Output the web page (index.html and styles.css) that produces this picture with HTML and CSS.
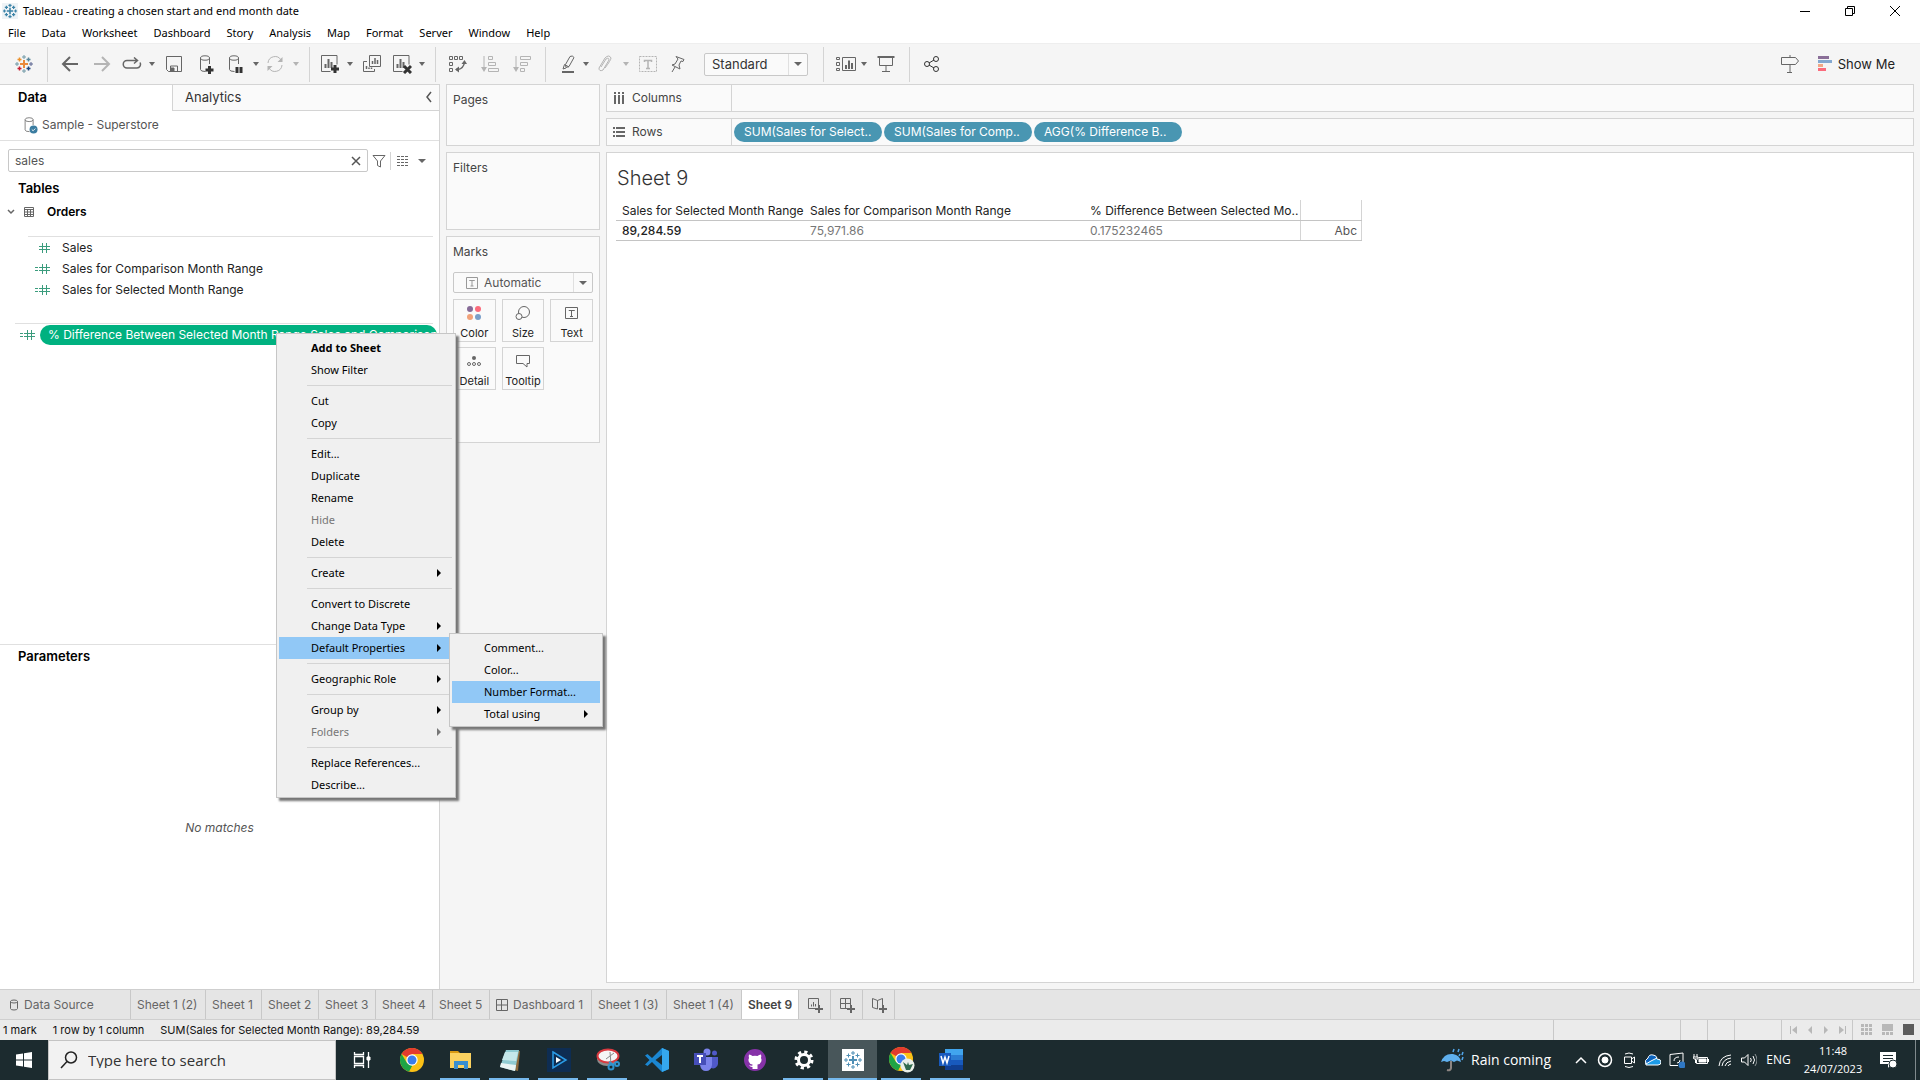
FILE: index.html
```html
<!DOCTYPE html>
<html lang="en">
<head>
<meta charset="utf-8">
<title>Tableau - creating a chosen start and end month date</title>
<link rel="stylesheet" href="styles.css">
</head>
<body>
<svg class="sprite" aria-hidden="true">
  <symbol id="mark" viewBox="0 0 18 18">
    <path d="M9 5v8M5 9h8" stroke-width="2"/>
    <path d="M9 0v4M7 2h4M9 14v4M7 16h4M2 7v4M0 9h4M16 7v4M14 9h4M4.500 2.500v4M2.500 4.500h4M13.500 2.500v4M11.500 4.500h4M4.500 11.500v4M2.500 13.500h4M13.500 11.500v4M11.500 13.500h4"/>
  </symbol>
  <symbol id="cyl" viewBox="0 0 18 20"><path d="M3.500 4v11.500q0 2 5 2M12.500 4v6M3.500 4a4.500 2.200 0 1 0 9 0a4.500 2.200 0 1 0-9 0"/></symbol>
  <symbol id="chart" viewBox="0 0 20 20"><path d="M10.500 17.500h-9v-16h15.500v9"/><path d="M5.500 14v-4M8.500 14V5M11.500 14V8" stroke-width="2"/></symbol>
  <symbol id="chrome" viewBox="0 0 24 24">
    <circle cx="12" cy="12" r="12" fill="#fbc116"/>
    <path d="M12 12L1.600 6A12 12 0 0 1 22.400 6H12z" fill="#e33b2e"/>
    <path d="M1.600 6L7 15l5 3-3.200 5.600A12 12 0 0 1 1.600 6z" fill="#1ea446"/>
    <path d="M7 15l5 2.500L9 23.500z" fill="#1ea446"/>
    <circle cx="12" cy="12" r="5.700" fill="#fff"/><circle cx="12" cy="12" r="4.500" fill="#3b7ded"/>
  </symbol>
</svg>

<header class="titlebar">
  <svg class="app-icon" width="16" height="16" viewBox="0 0 20 20"><rect width="20" height="20" fill="#eef3f6"/><g transform="translate(1 1)" stroke="#3d84a8" stroke-width="1.500" fill="none"><use href="#mark" width="18" height="18"/></g></svg>
  <h1 class="app-title">Tableau - creating a chosen start and end month date</h1>
  <div class="window-controls">
    <button aria-label="Minimize"><svg width="12" height="12"><path d="M1 6.500h10" stroke="#000"/></svg></button>
    <button aria-label="Restore"><svg width="12" height="12" fill="none" stroke="#000"><path d="M1.500 3.500h7v7h-7zM3.500 3.500v-2h7v7h-2"/></svg></button>
    <button aria-label="Close"><svg width="12" height="12" stroke="#000"><path d="M1 1l10 10M11 1L1 11"/></svg></button>
  </div>
</header>

<nav class="menubar">
  <button>File</button><button>Data</button><button>Worksheet</button><button>Dashboard</button><button>Story</button><button>Analysis</button><button>Map</button><button>Format</button><button>Server</button><button>Window</button><button>Help</button>
</nav>

<div class="toolbar">
  <button class="tool" aria-label="Start page"><svg width="18" height="18" viewBox="0 0 18 18" fill="none"><path d="M9 5v8M5 9h8" stroke="#eb8a3c" stroke-width="2"/><path d="M9 0v4M7 2h4M2 7v4M0 9h4" stroke="#7199a6"/><path d="M9 14v4M7 16h4" stroke="#7199a6"/><path d="M16 7v4M14 9h4" stroke="#5b6591"/><path d="M4.500 2.500v4M2.500 4.500h4" stroke="#eb912c" stroke-width="1.500"/><path d="M13.500 2.500v4M11.500 4.500h4" stroke="#59879b" stroke-width="1.500"/><path d="M4.500 11.500v4M2.500 13.500h4" stroke="#c72035" stroke-width="1.500"/><path d="M13.500 11.500v4M11.500 13.500h4" stroke="#1f457e" stroke-width="1.500"/></svg></button>
  <span class="rule"></span>
  <button class="tool" aria-label="Undo"><svg width="18" height="16"><path d="M17 8H2M9 1L2 8l7 7" stroke-width="2"/></svg></button>
  <button class="tool off" aria-label="Redo"><svg width="18" height="16"><path d="M1 8h15M9 1l7 7-7 7" stroke-width="2"/></svg></button>
  <button class="tool drop" aria-label="Replay"><svg width="20" height="14"><path d="M15 3.500H5a3.700 3.700 0 0 0 0 7.500h10a3.700 3.700 0 0 0 3-5.500M12 .5l3.500 3L12 6.500" stroke-width="1.500"/></svg><i class="caret"></i></button>
  <button class="tool" aria-label="Save"><svg width="18" height="18"><path d="M1.500 1.500h15v15h-13l-2-2zM5.500 16v-5h7v5"/><path d="M6 13h3v3H6z" fill="#666"/></svg></button>
  <button class="tool" aria-label="New data source"><svg width="18" height="20"><use href="#cyl"/><path class="heavy" d="M12.500 12v8M8.500 16h8"/></svg></button>
  <button class="tool drop" aria-label="Pause auto updates"><svg width="18" height="20"><use href="#cyl"/><path class="heavy" d="M11 13v6M15 13v6"/></svg><i class="caret"></i></button>
  <button class="tool drop off" aria-label="Run update"><svg width="18" height="18"><path d="M2 8a7 7 0 0 1 13-3M16 10a7 7 0 0 1-13 3"/><path d="M16.500 2v5h-5zM1.500 16v-5h5z" fill="#b4b4b4" stroke="none"/></svg><i class="caret"></i></button>
  <span class="rule"></span>
  <button class="tool drop" aria-label="New worksheet"><svg width="20" height="20"><use href="#chart"/><path class="heavy" d="M15 11v8M11 15h8"/></svg><i class="caret"></i></button>
  <button class="tool" aria-label="Duplicate"><svg width="18" height="18"><path d="M6.500.500h11v11h-11zM4 6.500H.500v10h11V14"/><path d="M9.500 9V6M12 9V3M14.500 9V5M3.500 14v-3M6 14v-1.500M8.500 14v-1.500" stroke-width="1.500"/></svg></button>
  <button class="tool drop" aria-label="Clear sheet"><svg width="20" height="20"><use href="#chart"/><path class="heavy" d="M12 12l7 7M19 12l-7 7"/></svg><i class="caret"></i></button>
  <span class="rule"></span>
  <button class="tool" aria-label="Swap rows and columns"><svg width="18" height="18"><path d="M.500 1.500h3v3h-3zM5.500 1.500h3v3h-3zM10.500 1.500h3v3h-3zM.500 7.500h3v3h-3zM.500 13.500h3v3h-3z"/><path d="M7 14.500h2q5.500-1 6.500-7" stroke-width="1.500"/><path d="M12.500 9l3-4 2.500 4zM10 11.500l-4 3 4 3z" fill="#666" stroke="none"/></svg></button>
  <button class="tool off" aria-label="Sort ascending"><svg width="18" height="18"><path d="M3 1v13M7.500 1.500h4v3h-4zM7.500 7.500h7v3h-7zM7.500 13.500h10v3h-10z"/><path d="M0 12h6l-3 5z" fill="#b4b4b4" stroke="none"/></svg></button>
  <button class="tool off" aria-label="Sort descending"><svg width="18" height="18"><path d="M3 1v13M7.500 1.500h10v3h-10zM7.500 7.500h7v3h-7zM7.500 13.500h4v3h-4z"/><path d="M0 12h6l-3 5z" fill="#b4b4b4" stroke="none"/></svg></button>
  <span class="rule"></span>
  <button class="tool drop" aria-label="Highlight"><svg width="20" height="20"><path d="M9.500 10.500l4.500-8q2.500-1.500 4 1l-5 9-3 1zM8.500 10.500l4.500 2.500M8.500 10.500L7 15l3-1"/><path d="M6 18h12" stroke-width="2"/></svg><i class="caret"></i></button>
  <button class="tool drop off" aria-label="Group"><svg width="18" height="18"><path d="M5 12l5-8q3-2 3 1l-6 10q-4 2-4-2L9 3q4-4 6 0 0 2-6 10"/></svg><i class="caret"></i></button>
  <button class="tool off" aria-label="Show mark labels"><svg width="18" height="16"><path d="M.500.500h17v15H.500z" stroke-dasharray="2 1"/><path d="M5.500 6V4.500h7V6M9 5v7M7 12.500h4" stroke-width="1.500"/></svg></button>
  <button class="tool" aria-label="Fix axes"><svg width="18" height="18"><path d="M5 1.500l8 3-1 2-2-.5-2 4 1 4-8-4 3-1 3-5zM4 12l-3 5"/></svg></button>
  <div class="picker fit"><select aria-label="Fit"><option>Standard</option></select><span class="picker-end"><i class="caret big"></i></span></div>
  <span class="rule"></span>
  <button class="tool drop" aria-label="Show or hide cards"><svg width="22" height="16"><path d="M2.500 1.500h3v2h-3zM2.500 6.500h3v3h-3zM2.500 12.500h3v2h-3zM8.500 1.500h13v13h-13z"/><path d="M12 13V9M15 13V4.500M18 13V7" stroke-width="2"/></svg><i class="caret"></i></button>
  <button class="tool" aria-label="Presentation mode"><svg width="18" height="18"><path d="M2.500 2v8.500h13V2M9 11v6M5 16.500h8"/><path d="M.500 2h17" stroke-width="2"/></svg></button>
  <span class="rule"></span>
  <button class="tool" aria-label="Share"><svg width="18" height="18" class="strong"><circle cx="4" cy="9" r="2.500"/><circle cx="13" cy="4" r="2.500"/><circle cx="13" cy="14" r="2.500"/><path d="M6 8l5-3M6 10l5 3"/></svg></button>
  <div class="toolbar-end">
    <button class="tool" aria-label="Guide"><svg width="20" height="20"><path d="M1.500 3.500h14l3 3.500-3 3.500h-14zM10 1v2M10 11v7M7 18.500h5"/></svg></button>
    <button class="show-me"><svg width="14" height="16"><path fill="#8a6f98" d="M0 0h11v3H0z"/><path fill="#83a8d0" d="M0 4h14v3H0z"/><path fill="#f1a886" d="M0 8h5v3H0z"/><path fill="#fb6b7c" d="M0 12h8v3H0z"/></svg>Show Me</button>
  </div>
</div>

<main class="workspace">
  <aside class="sidebar">
    <div class="side-tabs"><button class="side-tab current">Data</button><button class="side-tab">Analytics<svg width="6" height="12" fill="none" stroke="#555" stroke-width="1.500"><path d="M5 1L1 6l4 5"/></svg></button></div>
    <div class="source"><svg width="16" height="18" viewBox="0 0 18 20" fill="none" stroke="#777"><use href="#cyl"/><circle cx="13" cy="15" r="4.500" fill="#3a7ca0" stroke="none"/><path d="M11 15l1.500 1.500L15 14" stroke="#fff"/></svg>Sample - Superstore</div>
    <section class="tables">
      <div class="search">
        <div class="search-box"><input type="text" aria-label="Search fields" value="sales"><svg width="10" height="10" stroke="#555" stroke-width="1.500"><path d="M1 1l8 8M9 1L1 9"/></svg></div>
        <button aria-label="Filter"><svg width="14" height="14" fill="none" stroke="#666"><path d="M1 1.500h12L8.500 7v6l-3-1.500V7z"/></svg></button>
        <button class="view" aria-label="View"><svg width="12" height="10" stroke="#666"><path d="M0 .5h12M0 3.500h12M0 6.500h12M0 9.500h12" stroke-dasharray="3 1"/></svg><i class="caret big"></i></button>
      </div>
      <h2>Tables</h2>
      <div class="folder"><svg width="8" height="6" fill="none" stroke="#666" stroke-width="1.500"><path d="M1 1l3 3 3-3"/></svg><svg width="10" height="10" fill="none" stroke="#666"><path d="M.500.500h9v9h-9zM0 2.500h10M0 5h10M0 7.500h10M3.500 2v8M6.500 2v8"/></svg><h3>Orders</h3></div>
      <ul class="fields">
        <li><svg width="16" height="12"><path d="M7.500 1v10M11.500 1v10M4 4.500h11M4 7.500h11"/></svg>Sales</li>
        <li><svg width="16" height="12"><path d="M0 4.500h3M0 7.500h3M7.500 1v10M11.500 1v10M4 4.500h11M4 7.500h11"/></svg>Sales for Comparison Month Range</li>
        <li><svg width="16" height="12"><path d="M0 4.500h3M0 7.500h3M7.500 1v10M11.500 1v10M4 4.500h11M4 7.500h11"/></svg>Sales for Selected Month Range</li>
      </ul>
      <div class="chosen"><svg width="16" height="12"><path d="M0 4.500h3M0 7.500h3M7.500 1v10M11.500 1v10M4 4.500h11M4 7.500h11"/></svg><span class="pill green">% Difference Between Selected Month Range Sales and Comparison</span></div>
    </section>
    <section class="parameters"><h2>Parameters</h2><p>No matches</p></section>
  </aside>

  <div class="cards">
    <section class="card pages">Pages</section>
    <section class="card filters">Filters</section>
    <section class="card marks">Marks
      <div class="picker mark-type"><svg width="12" height="12" fill="none" stroke="#999"><path d="M.500.500h11v11H.500zM3.500 4V3.500h5V4M6 4v5M4.500 9h3"/></svg><select aria-label="Mark type"><option>Automatic</option></select><span class="picker-end"><i class="caret big"></i></span></div>
      <div class="mark-grid">
        <button><svg width="16" height="16"><circle cx="4" cy="4" r="3" fill="#866b97" stroke="none"/><circle cx="12" cy="4" r="3" fill="#fb6b7c" stroke="none"/><circle cx="4" cy="12" r="3" fill="#f1a27a" stroke="none"/><circle cx="12" cy="12" r="3" fill="#7a9fc9" stroke="none"/></svg>Color</button>
        <button><svg width="16" height="16"><circle cx="9" cy="7" r="5.500"/><circle cx="4" cy="11.500" r="3" fill="#fafafa"/></svg>Size</button>
        <button><svg width="16" height="16"><path d="M1.500 2.500h12v11h-12zM5 6V5.500h5.500V6M7.500 5.500v6M6 11.500h3"/></svg>Text</button>
        <button><svg width="16" height="16"><circle cx="8" cy="5" r="2" fill="#666" stroke="none"/><circle cx="3" cy="11" r="1.500"/><circle cx="8" cy="11" r="1.500"/><circle cx="13" cy="11" r="1.500"/></svg>Detail</button>
        <button><svg width="16" height="16"><path d="M1.500 2.500h13v8h-2.500v3.500l-4-3.500H1.500z"/></svg>Tooltip</button>
      </div>
    </section>
  </div>

  <div class="canvas">
    <div class="shelf"><div class="shelf-name"><svg width="12" height="12" fill="#666"><path d="M1 0h2v2H1zM5 0h2v2H5zM9 0h2v2H9zM1 3h2v9H1zM5 3h2v9H5zM9 3h2v9H9z"/></svg>Columns</div></div>
    <div class="shelf"><div class="shelf-name"><svg width="12" height="12" fill="#666"><path d="M0 1h2v2H0zM3 1h9v2H3zM0 5h2v2H0zM3 5h9v2H3zM0 9h2v2H0zM3 9h9v2H3z"/></svg>Rows</div><span class="pill">SUM(Sales for Select..</span><span class="pill">SUM(Sales for Comp..</span><span class="pill">AGG(% Difference B..</span></div>
    <section class="sheet">
      <h2>Sheet 9</h2>
      <table>
        <thead><tr><th class="c1">Sales for Selected Month Range</th><th class="c2">Sales for Comparison Month Range</th><th class="c3">% Difference Between Selected Mo..</th><th class="c4"></th></tr></thead>
        <tbody><tr><th>89,284.59</th><td>75,971.86</td><td>0.175232465</td><td class="c4">Abc</td></tr></tbody>
      </table>
    </section>
  </div>
</main>

<nav class="sheet-tabs">
  <button class="data-tab"><svg width="10" height="12"><path d="M1.500 2.500v7q0 1.500 3.500 1.500t3.500-1.500v-7q0-1.500-3.500-1.500T1.500 2.500q0 1.500 3.500 1.500t3.500-1.500"/></svg>Data Source</button>
  <button class="wide">Sheet 1 (2)</button><button class="slim">Sheet 1</button><button>Sheet 2</button><button>Sheet 3</button><button>Sheet 4</button><button>Sheet 5</button>
  <button class="dash-tab"><svg width="12" height="12"><path d="M.500.500h11v11H.500zM5.500 0v12M0 6h12"/></svg>Dashboard 1</button>
  <button class="wide">Sheet 1 (3)</button><button class="wide">Sheet 1 (4)</button><button class="current">Sheet 9</button>
  <button class="add" aria-label="New worksheet"><svg width="16" height="16"><path d="M8 11.500H1.500v-10h10V8M4.500 9.500v-2M6.500 9.500V5M8.500 9.500V7"/><path d="M12 8v8M8 12h8" stroke-width="2"/></svg></button>
  <button class="add" aria-label="New dashboard"><svg width="16" height="16"><path d="M8 11.500H1.500v-10h10V8M6.500 2v9M2 6.500h10"/><path d="M12 8v8M8 12h8" stroke-width="2"/></svg></button>
  <button class="add" aria-label="New story"><svg width="16" height="16"><path d="M6.500 12l-5-1.500v-9l5 2 5-2V8M6.500 3.500V12"/><path d="M12 8v8M8 12h8" stroke-width="2"/></svg></button>
</nav>

<footer class="status">
  <span>1 mark</span><span>1 row by 1 column</span><span>SUM(Sales for Selected Month Range): 89,284.59</span>
  <div class="status-cells"><i class="long"></i><i></i><i></i><i class="mid"></i>
    <div class="pager"><svg width="8" height="8"><path d="M0 0h1v8H0zM7 0v8L2 4z"/></svg><svg width="8" height="8"><path d="M6 0v8L2 4z"/></svg><svg width="8" height="8"><path d="M2 0v8l4-4z"/></svg><svg width="8" height="8"><path d="M7 0h1v8H7zM1 0v8l5-4z"/></svg></div>
    <div class="views"><svg width="12" height="12"><path d="M0 0h3v3H0zM4 0h3v3H4zM8 0h3v3H8zM0 4h3v3H0zM4 4h3v3H4zM8 4h3v3H8zM0 8h3v3H0zM4 8h3v3H4zM8 8h3v3H8z"/></svg><svg width="12" height="12"><path d="M0 0h11v7H0zM0 8h3v3H0zM4 8h3v3H4zM8 8h3v3H8z"/></svg><svg class="dark" width="12" height="12"><path d="M0 0h11v11H0z"/></svg></div>
  </div>
</footer>

<div class="taskbar">
  <button class="start" aria-label="Start"><svg width="16" height="16" fill="#fff"><path d="M0 2.500l7-1v6H0zM8 1.300L16 0v7.500H8zM0 8.500h7v6l-7-1zM8 8.500h8V16l-8-1.300z"/></svg></button>
  <div class="find"><svg width="18" height="18" fill="none" stroke="#222" stroke-width="1.500"><circle cx="11" cy="6.500" r="5.500"/><path d="M7 10.500L1 17"/></svg><input type="text" aria-label="Search" placeholder="Type here to search"></div>
  <button class="app task-view" aria-label="Task view"><svg width="18" height="16" fill="none" stroke="#fff"><path d="M1.500 0v2.500h9V0M1.500 4.500h9v7h-9zM1.500 16v-2.500h9V16M15.500 0v16" stroke-width="1.300"/><path d="M14 5h3v3h-3z" fill="#fff"/></svg></button>
  <button class="app" aria-label="Chrome"><svg width="24" height="24"><use href="#chrome"/></svg></button>
  <button class="app open" aria-label="File Explorer"><svg width="24" height="24"><path d="M1 3h8l2 2H1z" fill="#d99a12"/><path d="M1 5h21v15H1z" fill="#fbd260"/><path d="M5 21v-8h14v8h-4v-4H9v4z" fill="#3a8fd0"/></svg></button>
  <button class="app open" aria-label="Notepad"><svg width="24" height="24"><path d="M9 2l13 1-2 20-4-1z" fill="#8d6a3c"/><path d="M8 2h13l-4 21-15-4z" fill="#8fcbd2"/><path d="M7 4h13l-2 9-14-1z" fill="#c5e7e9"/><path d="M3 15l15 2-1 6-15-4z" fill="#e9f4f4"/></svg></button>
  <button class="app open" aria-label="Media"><svg width="24" height="24"><path fill="#0e2d52" d="M0 0h24v24H0z"/><path d="M6 4l13 8-13 8z" fill="#0e2d52" stroke="#2a9ce8" stroke-width="1.500"/><path d="M9 9l5 3-5 3z" fill="#fff"/></svg></button>
  <button class="app open" aria-label="Snipping Tool"><svg width="24" height="24" fill="none"><ellipse cx="11" cy="11" rx="10" ry="7" fill="#8c8c8c"/><ellipse cx="12" cy="8" rx="10.500" ry="6.500" fill="#f5f5f5" stroke="#d83a40" stroke-width="2"/><path d="M10 11l8-6M14 4l1 12" stroke="#888"/><path d="M13 14l5 3" stroke="#2f93cf" stroke-width="2"/><circle cx="15" cy="19" r="2.500" stroke="#2f93cf" stroke-width="2"/><circle cx="21" cy="16" r="2" stroke="#2f93cf" stroke-width="2"/></svg></button>
  <button class="app" aria-label="Visual Studio Code"><svg width="24" height="24"><path d="M17 0l7 3v18l-7 3L7 14l-4.500 4L0 16.500 4.500 12 0 7.500 2.500 6 7 10z" fill="#1b87d2"/><path d="M17 0l7 3v18l-7 3z" fill="#35a8ee"/><path d="M17 7v10l-6.500-5z" fill="#1c2b2f"/></svg></button>
  <button class="app" aria-label="Teams"><svg width="24" height="24"><circle cx="13" cy="4" r="3.500" fill="#7b83eb"/><circle cx="20.500" cy="5" r="2.500" fill="#5059c9"/><path d="M15 9h9v7a5 5 0 0 1-7 4z" fill="#5059c9"/><path d="M7 9h11v8q-1 6-6 6t-6-6z" fill="#7b83eb"/><path d="M0 5h12v12H0z" fill="#464eb8"/><path d="M3 8h6M6 8v7" stroke="#fff" stroke-width="2"/></svg></button>
  <button class="app" aria-label="GitHub"><svg width="24" height="24"><circle cx="12" cy="12" r="11" fill="#8632a8"/><path d="M6 6.500q2 0 3.500 1.500 2.500-.6 5 0Q16 6.500 18 6.500q.6 1.800 0 3.500 1 1.500.3 3.500-.8 2.500-3.800 3V21h-5v-2q-2.500.3-3.500-2 2 1 3.500.500V16.500q-3-.5-3.800-3Q5 11.500 6 10q-.6-1.700 0-3.500z" fill="#fff"/></svg></button>
  <button class="app open" aria-label="Settings"><svg width="20" height="20" fill="none" stroke="#fff"><circle cx="10" cy="10" r="5.500" stroke-width="3"/><circle cx="10" cy="10" r="8" stroke-width="3" stroke-dasharray="3.200 3.083"/></svg></button>
  <button class="app active" aria-label="Tableau"><svg width="22" height="22" viewBox="0 0 22 22"><path fill="#fff" d="M0 0h22v22H0z"/><g transform="translate(2 2)" fill="none" stroke="#4f8fb5"><use href="#mark" width="18" height="18"/></g></svg></button>
  <button class="app open" aria-label="Chrome profile"><svg width="26" height="26"><use href="#chrome" width="24" height="24"/><circle cx="18.500" cy="18.500" r="7" fill="#e9efe9"/><path d="M14 15l4 3 1-3 1 3 4-1-3 6h-4z" fill="#2f6b4d"/></svg></button>
  <button class="app open" aria-label="Word"><svg width="24" height="24"><path fill="#41a5ee" d="M6 1h18v6H6z"/><path fill="#2b7cd3" d="M6 7h18v5H6z"/><path fill="#185abd" d="M6 12h18v5H6z"/><path fill="#103f91" d="M6 17h18v5H6z"/><path fill="#185abd" d="M0 5h12v13H0z"/><path d="M2 8l2 7 2-6 2 6 2-7" fill="none" stroke="#fff" stroke-width="1.500"/></svg></button>
  <div class="tray">
    <button class="weather"><svg width="24" height="24" fill="none"><path d="M0 14Q3 5 12 6q7 1 8 8l-4-1.500-3 1.500-3-1.500L6 14l-3-1z" fill="#5fb0ee"/><path d="M10 13v7q-.5 3-4 2" stroke="#8c8582" stroke-width="2"/><path d="M13 1l-1 3M18 1l-1 3M22 4l-1 3M19 6l-1 2M22 9l-1 3" stroke="#52a7ec" stroke-width="1.500"/></svg>Rain coming</button>
    <button class="tip" aria-label="Show hidden icons"><svg width="16" height="16"><path d="M3 11l5-5 5 5" stroke-width="1.500"/></svg></button>
    <button class="tip" aria-label="Recorder"><svg width="16" height="16"><circle cx="8" cy="8" r="6.500" stroke-width="1.500"/><circle cx="8" cy="8" r="3" fill="#fff"/></svg></button>
    <button class="tip" aria-label="Meet now"><svg width="16" height="16"><path d="M3.500 5h7v6.500h-7zM10.500 7l3-2v6l-3-2M4 2q4-2 8 0M4 14.500q4 2 8 0"/></svg></button>
    <button class="tip" aria-label="OneDrive"><svg width="16" height="16" stroke="none"><path d="M1 13q-2-4 2-6 1-4 5-3 3 0 4 3 4 0 4 3t-3 3z" fill="#1c9be8"/><path d="M1 12q-2-4 2-6 1-4 5-3 3 0 4 3l-6 3z" fill="#0b63bd"/></svg></button>
    <button class="tip" aria-label="Update"><svg width="16" height="16"><path d="M1 2.500l13-1.500v9M1 2.500v11h8M5 9q0-4 5-4M8 11q3 0 3-3"/><circle cx="13" cy="13" r="3.500" fill="#2f78c4" stroke="none"/></svg></button>
    <button class="tip" aria-label="Battery"><svg width="16" height="16"><path d="M5.500 5.500h9v6h-11V8M15.500 7v3M1 2v3M4 2v3M0 5h5v2H1zM2.500 7v4"/><path d="M6 7h7v3H6z" fill="#fff"/></svg></button>
    <button class="tip" aria-label="Network"><svg width="16" height="16"><path d="M2 14Q3 4 14 3M5 14q1-7 9-8M8 14q1-4 6-5M11 14q0-1 3-2"/></svg></button>
    <button class="tip" aria-label="Volume"><svg width="16" height="16"><path d="M.500 6h3L7 2.500v11L3.500 10h-3zM9.500 6q1.500 2 0 4M12 4q3 4 0 8"/><path d="M14 2q4 6 0 12" stroke="#8b9496"/></svg></button>
    <button class="lang">ENG</button>
    <button class="clock"><span>11:48</span><span>24/07/2023</span></button>
    <button class="note" aria-label="Notifications"><svg width="18" height="18"><path d="M1 1h16v12h-5l-3 4v-4H1z" fill="#fff"/><path d="M4 4.500h10M4 7.500h10M4 10.500h6" stroke="#1c2b2f"/><circle cx="14" cy="13" r="4" fill="#fff" stroke="#1c2b2f"/></svg></button>
    <span class="peek"></span>
  </div>
</div>

<div class="menu" role="menu">
  <button class="strong-item">Add to Sheet</button><button>Show Filter</button><hr>
  <button>Cut</button><button>Copy</button><hr>
  <button>Edit...</button><button>Duplicate</button><button>Rename</button><button disabled>Hide</button><button>Delete</button><hr>
  <button class="more">Create</button><hr>
  <button>Convert to Discrete</button><button class="more">Change Data Type</button>
  <div class="parent"><button class="more lit">Default Properties</button>
    <div class="menu sub" role="menu"><button>Comment...</button><button>Color...</button><button class="lit">Number Format...</button><button class="more">Total using</button></div>
  </div><hr>
  <button class="more">Geographic Role</button><hr>
  <button class="more">Group by</button><button class="more" disabled>Folders</button><hr>
  <button>Replace References...</button><button>Describe...</button>
</div>
</body>
</html>
```
FILE: styles.css
```css
* { box-sizing: border-box; }
body {
  margin: 0;
  height: 100vh;
  display: flex;
  flex-direction: column;
  overflow: hidden;
  position: relative;
  background: #f5f5f5;
  color: #333;
  font: 12px/16px Inter, "Liberation Sans", sans-serif;
}
button, input, select { font: inherit; color: inherit; border: 0; background: none; padding: 0; margin: 0; border-radius: 0; outline: 0; }
button { white-space: nowrap; }
h1, h2, h3, p, ul { margin: 0; padding: 0; font-size: 12px; list-style: none; }
svg { display: block; flex: none; }
.sprite { position: absolute; width: 0; height: 0; }
.caret { width: 0; height: 0; border: 3px solid transparent; border-top: 4px solid #666; border-bottom: 0; }
.caret.big { border-width: 4px 4px 0; }

/* window frame */
.titlebar, .menubar, .menu { font-family: "Noto Sans", "Open Sans", sans-serif; font-size: 11px; color: #000; }
.titlebar { display: flex; align-items: center; height: 22px; flex: none; background: #fff; padding: 0 3px 0 2px; gap: 5px; }
.app-title { font-size: 11px; font-weight: 400; flex: 1; }
.window-controls { display: flex; }
.window-controls button { width: 45px; height: 22px; display: grid; place-items: center; }
.menubar { display: flex; height: 21px; flex: none; background: #fff; padding-left: 8px; gap: 16px; }

/* toolbar */
.toolbar { display: flex; align-items: center; height: 41px; flex: none; padding: 0 17px 0 8px; border-top: 1px solid #eee; }
.tool { width: 32px; height: 32px; display: flex; align-items: center; justify-content: center; }
.tool svg { fill: none; stroke: #666; }
.tool.drop { width: 40px; justify-content: space-between; padding: 0 3px 0 4px; }
.tool .strong { stroke: #333; }
.tool .heavy { stroke: #333; stroke-width: 3; }
.off svg { stroke: #b4b4b4; }
.off .caret { border-top-color: #b4b4b4; }
.rule { width: 1px; height: 35px; margin: 0 6px 0 7px; background: #d4d4d4; }
.picker { display: flex; align-items: center; border: 1px solid #c8c8c8; border-radius: 2px; background: #fafafa; }
.picker select { appearance: none; flex: 1; min-width: 0; }
.picker-end { width: 19px; align-self: stretch; display: grid; place-items: center; border-left: 1px solid #e0e0e0; }
.fit { width: 104px; height: 23px; margin: 0 8px; padding-left: 7px; font-size: 13px; }
.toolbar-end { margin-left: auto; display: flex; align-items: center; gap: 12px; }
.show-me { display: flex; align-items: center; gap: 6px; font-size: 13px; color: #222; padding-right: 8px; }

/* main area */
.workspace { flex: 1; min-height: 0; display: grid; grid-template-columns: 440px 154px 1fr; column-gap: 6px; padding-right: 6px; }
.sidebar { display: grid; grid-template-rows: 26px 30px 593fr 407fr; background: #fff; border-right: 1px solid #d4d4d4; border-top: 1px solid #d4d4d4; min-width: 0; }
.side-tabs { display: flex; font-size: 13px; }
.side-tab { display: flex; align-items: center; justify-content: space-between; flex: 1; padding: 0 7px 2px 12px; background: #fafafa; border: solid #d4d4d4; border-width: 0 0 1px 1px; color: #333; }
.side-tab.current { flex: 0 0 172px; background: #fff; border: 0; padding-left: 18px; font-weight: 600; color: #000; }
.source { display: flex; align-items: center; gap: 4px; padding: 0 0 2px 22px; color: #555; border-bottom: 1px solid #e0e0e0; }
.tables { padding-top: 8px; min-height: 0; }
.search { display: flex; align-items: center; padding: 0 0 0 8px; gap: 4px; }
.search-box { width: 360px; height: 23px; display: flex; align-items: center; border: 1px solid #c8c8c8; border-radius: 2px; padding: 0 6px; color: #555; }
.search-box input { flex: 1; min-width: 0; }
.view { display: flex; align-items: center; gap: 9px; height: 18px; border-left: 1px solid #d4d4d4; padding-left: 6px; }
.tables h2, .parameters h2 { font-size: 13px; font-weight: 600; line-height: 23px; padding-left: 18px; color: #000; }
.tables h2 { margin-top: 5px; }
.folder { display: flex; align-items: center; height: 24px; gap: 9px; padding-left: 7px; }
.folder h3 { font-weight: 600; color: #000; padding-left: 4px; }
.fields { margin: 12px 6px 0 28px; border-top: 1px solid #e0e0e0; }
.fields li { display: flex; align-items: center; height: 21px; gap: 11px; padding-left: 7px; color: #222; }
.fields svg, .chosen svg { fill: none; stroke: #3b9c7d; }
.chosen { display: flex; align-items: center; margin: 23px 0 0 15px; padding: 2px 2px 0 5px; gap: 4px; position: relative; }
.chosen::before { content: ""; position: absolute; left: 0; right: 6px; top: 0; border-top: 1px solid #e0e0e0; }
.pill { display: block; width: 148px; height: 20px; line-height: 20px; padding: 0 10px; border-radius: 10px; background: #4996b2; color: #fff; white-space: nowrap; overflow: hidden; }
.pill.green { flex: 1; min-width: 0; padding: 0 8px; background: #00b180; }
.parameters { display: flex; flex-direction: column; border-top: 1px solid #e0e0e0; }
.parameters p { flex: 1; display: grid; place-items: center; font-style: italic; color: #555; }

.cards { display: flex; flex-direction: column; gap: 6px; }
.card { border: 1px solid #d4d4d4; background: #fafafa; padding: 7px 6px; color: #444; }
.pages { height: 62px; }
.filters { height: 78px; }
.marks { height: 207px; }
.mark-type { margin-top: 12px; height: 21px; padding-left: 12px; gap: 6px; color: #555; }
.mark-grid { display: grid; grid-template-columns: repeat(3, 1fr); gap: 5px 6px; margin-top: 6px; }
.mark-grid button { height: 43px; border: 1px solid #d4d4d4; display: flex; flex-direction: column; align-items: center; justify-content: space-between; padding-top: 5px; font-size: 11px; color: #222; }
.mark-grid svg { fill: none; stroke: #666; }

.canvas { display: flex; flex-direction: column; gap: 6px; min-width: 0; padding-bottom: 6px; }
.shelf { display: flex; align-items: center; gap: 2px; height: 28px; border: 1px solid #d4d4d4; background: #fafafa; }
.shelf-name { align-self: stretch; width: 125px; display: flex; align-items: center; gap: 7px; padding-left: 6px; border-right: 1px solid #d4d4d4; color: #444; }
.sheet { flex: 1; background: #fff; border: 1px solid #d4d4d4; padding: 11px 9px; }
.sheet h2 { font-size: 20px; line-height: 28px; font-weight: 300; padding-left: 1px; }
.sheet table { margin-top: 8px; border-collapse: collapse; table-layout: fixed; width: 746px; }
.sheet th, .sheet td { height: 20px; padding: 1px 0 0 6px; text-align: left; line-height: 18px; white-space: nowrap; border-bottom: 1px solid #c4c4c4; color: #777; font-weight: 400; }
.sheet th { color: #222; }
.sheet thead th { padding-top: 2px; line-height: 17px; }
.sheet tbody th { font-weight: 500; }
.sheet .c1 { width: 188px; }
.sheet .c2 { width: 280px; }
.sheet .c3 { width: 216px; }
.sheet .c4 { text-align: right; padding-right: 4px; border-left: 1px solid #d4d4d4; border-right: 1px solid #d4d4d4; color: #555; }

/* sheet tabs and status */
.sheet-tabs { display: flex; height: 31px; flex: none; background: #e5e5e5; border: solid #cfcfcf; border-width: 1px 0; color: #666; }
.sheet-tabs button { width: 57px; border-right: 1px solid #c8c8c8; padding-left: 6px; display: flex; align-items: center; gap: 5px; }
.sheet-tabs svg { fill: none; stroke: #666; }
.sheet-tabs .data-tab { width: 131px; padding-left: 9px; }
.sheet-tabs .wide { width: 75px; }
.sheet-tabs .slim { width: 56px; }
.sheet-tabs .dash-tab { width: 102px; }
.sheet-tabs .current { background: #fff; font-weight: 600; color: #444; }
.sheet-tabs .add { width: 32px; padding: 0; justify-content: center; }
.status { display: flex; align-items: center; gap: 16px; height: 20px; flex: none; background: #ebebeb; padding-left: 3px; font-size: 11px; color: #111; }
.status-cells { margin-left: auto; display: flex; align-self: stretch; padding-right: 5px; }
.status-cells > * { border-left: 1px solid #c8c8c8; width: 27px; }
.status-cells .long { width: 127px; }
.status-cells .mid { width: 47px; }
.status-cells .pager { width: 71px; display: flex; align-items: center; gap: 8px; padding-left: 8px; }
.status-cells .views { width: 63px; display: flex; align-items: center; gap: 9px; padding-left: 8px; }
.status svg { fill: #b8b8b8; }
.status .dark { fill: #5c5c5c; }

/* taskbar */
.taskbar { display: flex; height: 40px; flex: none; background: #1c2b2f; color: #fff; font-family: "Open Sans", "Noto Sans", sans-serif; }
.start { width: 48px; display: grid; place-items: center; }
.find { width: 288px; display: flex; align-items: center; gap: 10px; padding-left: 11px; border: 1px solid #c4c4c4; background: #f2f2f2; color: #333; font-size: 15px; }
.find input { flex: 1; min-width: 0; }
.find input::placeholder { color: #333; opacity: 1; }
.app { width: 49px; display: grid; place-items: center; position: relative; }
.app.task-view { width: 51px; }
.app.open::after, .app.active::after { content: ""; position: absolute; left: 4px; right: 5px; bottom: 0; height: 2px; background: #76b9ed; }
.app.active { background: #48565a; }
.app.active::after { left: 0; right: 0; }
.tray { margin-left: auto; display: flex; align-items: stretch; }
.weather { display: flex; align-items: center; gap: 6px; font-size: 14px; padding-right: 18px; }
.tip { width: 24px; display: grid; place-items: center; }
.tip svg { fill: none; stroke: #fff; }
.lang { width: 35px; }
.clock { width: 74px; display: flex; flex-direction: column; justify-content: center; align-items: center; line-height: 18px; font-size: 11px; }
.note { width: 36px; display: grid; place-items: center; }
.peek { width: 5px; margin-left: 9px; border-left: 1px solid #808a8d; }

/* field context menu */
.menu { position: absolute; left: 276px; top: 333px; width: 180px; padding: 3px 2px 1px; background: #f0f0f0; border: 1px solid #c6c6c6; box-shadow: 3px 3px 2px #777; z-index: 2; }
.menu button { display: flex; align-items: center; justify-content: space-between; width: 100%; height: 22px; padding: 0 12px 0 32px; }
.menu button:disabled { color: #777; }
.menu .strong-item { font-weight: 700; }
.menu .more::after { content: ""; border: 4px solid transparent; border-left-color: currentColor; border-right: 0; }
.menu .lit { background: #91c8f6; }
.menu hr { height: 1px; margin: 4px 1px 4px 28px; border: 0; background: #d4d4d4; }
.parent { position: relative; }
.menu .sub { left: 170px; top: -4px; width: 154px; }
```
